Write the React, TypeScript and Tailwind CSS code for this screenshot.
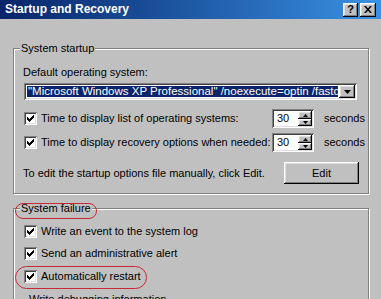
import type { ReactNode } from "react";

const sunken =
  "shadow-[inset_1px_1px_0_#808080,inset_-1px_-1px_0_#fff,inset_2px_2px_0_#404040,inset_-2px_-2px_0_#dfdfdf]";
const raised =
  "shadow-[inset_-1px_-1px_0_#000,inset_1px_1px_0_#fff,inset_-2px_-2px_0_#808080,inset_2px_2px_0_#dfdfdf]";

function CheckBox() {
  return (
    <span className={`relative inline-block h-[13px] w-[13px] shrink-0 bg-white ${sunken}`}>
      <svg className="absolute left-[3px] top-[3px]" width="7" height="7" viewBox="0 0 7 7">
        <path
          d="M6 0h1v1h-1zM5 1h2v1h-2zM0 2h1v1h-1zM4 2h3v1h-3zM0 3h2v1h-2zM3 3h3v1h-3zM0 4h5v1h-5zM1 5h3v1h-3zM2 6h1v1h-1z"
          fill="#000"
        />
      </svg>
    </span>
  );
}

function Arrow({ up, w = 5 }: { up?: boolean; w?: number }) {
  const h = Math.ceil(w / 2);
  return (
    <svg width={w} height={h} viewBox={`0 0 ${w} ${h}`}>
      <polygon points={up ? `0,${h} ${w},${h} ${w / 2},0` : `0,0 ${w},0 ${w / 2},${h}`} fill="#000" />
    </svg>
  );
}

function Spinner({ value }: { value: string }) {
  return (
    <div className={`flex h-[19px] w-[42px] bg-white p-[2px] ${sunken}`}>
      <span className="flex-1 pl-[3px] leading-[15px]">{value}</span>
      <div className="flex w-[14px] flex-col">
        <div className={`flex h-[8px] items-center justify-center bg-[#c0c0c0] ${raised}`}>
          <Arrow up />
        </div>
        <div className={`flex h-[7px] items-center justify-center bg-[#c0c0c0] ${raised}`}>
          <Arrow />
        </div>
      </div>
    </div>
  );
}

function Group({ title, className, children }: { title: string; className: string; children?: ReactNode }) {
  return (
    <div
      className={`relative border border-[#808080] shadow-[inset_1px_1px_0_#fff,1px_1px_0_#fff] ${className}`}
    >
      <span className="absolute left-[6px] -top-[7px] bg-[#c0c0c0] px-px">{title}</span>
      {children}
    </div>
  );
}

function CheckRow({ label }: { label: string }) {
  return (
    <div className="ml-px flex h-[13px] items-center gap-[4px]">
      <CheckBox />
      <span>{label}</span>
    </div>
  );
}

export default function App() {
  return (
    <div className="relative h-[299px] w-[381px] overflow-hidden bg-[#c0c0c0] font-['Liberation_Sans',Arial,sans-serif] text-[11px] leading-[13px] text-black">
      <div className="flex h-[19px] items-center bg-linear-to-r from-[#0a246a] to-[#3a92e4] pl-[5px] pr-[5px]">
        <span className="text-[12px] font-bold text-white">Startup and Recovery</span>
        <div className="ml-auto flex gap-[2px]">
          <div className={`flex h-[14px] w-[15px] items-center justify-center bg-[#c0c0c0] text-[11px] font-bold leading-none ${raised}`}>
            ?
          </div>
          <div className={`flex h-[14px] w-[16px] items-center justify-center bg-[#c0c0c0] ${raised}`}>
            <svg width="8" height="7" viewBox="0 0 8 7">
              <path d="M0 0h2l2 2.5L6 0h2L5 3.5 8 7H6L4 4.5 2 7H0l3-3.5z" fill="#000" />
            </svg>
          </div>
        </div>
      </div>

      <Group title="System startup" className="ml-[13px] mt-[29px] h-[146px] w-[356px]">
        <div className="flex flex-col pl-[9px] pt-[17px]">
          <span>Default operating system:</span>
          <div className={`ml-px mt-[4px] flex h-[17px] w-[333px] bg-white p-[2px] ${sunken}`}>
            <div className="m-px flex-1 overflow-hidden whitespace-nowrap bg-[#0a246a] pl-px text-[11.5px] leading-[11px] text-white">
              "Microsoft Windows XP Professional" /noexecute=optin /fastdetect
            </div>
            <div className={`flex w-[16px] items-center justify-center bg-[#c0c0c0] ${raised}`}>
              <Arrow w={7} />
            </div>
          </div>

          <div className="ml-px mt-[9px] flex h-[19px] items-center">
            <div className="flex w-[248px] items-center gap-[4px]">
              <CheckBox />
              <span>Time to display list of operating systems:</span>
            </div>
            <Spinner value="30" />
            <span className="ml-[10px]">seconds</span>
          </div>
          <div className="ml-px mt-[5px] flex h-[19px] items-center">
            <div className="flex w-[248px] items-center gap-[4px]">
              <CheckBox />
              <span>Time to display recovery options when needed:</span>
            </div>
            <Spinner value="30" />
            <span className="ml-[10px]">seconds</span>
          </div>

          <div className="mt-[10px] flex h-[22px] items-center">
            <span className="w-[261px]">To edit the startup options file manually, click Edit.</span>
            <div className={`flex h-[22px] w-[75px] items-center justify-center bg-[#c0c0c0] ${raised}`}>
              Edit
            </div>
          </div>
        </div>
      </Group>

      <Group title="System failure" className="ml-[13px] mt-[14px] h-[120px] w-[356px]">
        <div className="flex flex-col pl-[9px] pt-[16px]">
          <CheckRow label="Write an event to the system log" />
          <div className="mt-[9px]">
            <CheckRow label="Send an administrative alert" />
          </div>
          <div className="mt-[10px]">
            <CheckRow label="Automatically restart" />
          </div>
          <Group title="Write debugging information" className="-ml-[2px] mt-[16px] h-[40px] w-[340px]" />
        </div>
      </Group>

      <div className="absolute left-[15px] top-[203px] h-[16px] w-[82px] rounded-full border-[1.5px] border-[#c52a36]" />
      <div className="absolute left-[15px] top-[266px] h-[23px] w-[132px] rounded-full border-[1.5px] border-[#c52a36]" />
    </div>
  );
}
